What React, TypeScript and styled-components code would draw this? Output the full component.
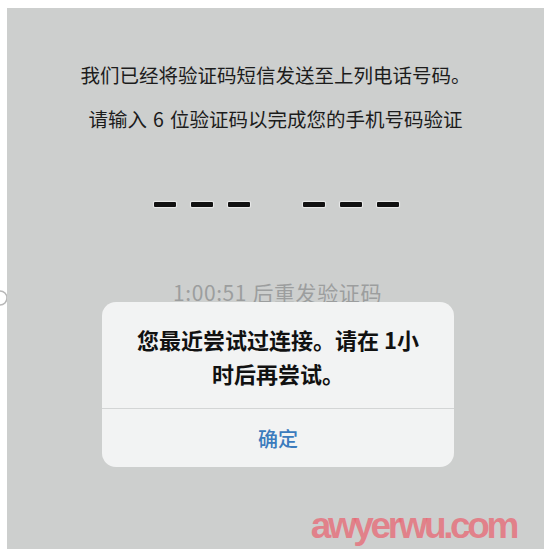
import styled, { createGlobalStyle } from 'styled-components';

const GlobalStyle = createGlobalStyle`
  html, body {
    margin: 0;
    padding: 0;
    background: #ffffff;
  }
  body {
    font-family: "Noto Sans CJK SC", "Noto Sans", sans-serif;
  }
`;

const Page = styled.div`
  position: relative;
  width: 550px;
  height: 557px;
  padding: 8px 0 0 7px;
  box-sizing: border-box;
`;

const Screen = styled.div`
  position: relative;
  width: 537px;
  height: 541px;
  background: #cdcfce;
  display: flex;
  flex-direction: column;
  align-items: center;
  padding-top: 54px;
  box-sizing: border-box;
  overflow: hidden;
`;

const Line = styled.p<{ $gap?: number }>`
  margin: ${(p) => p.$gap ?? 0}px 0 0;
  font-size: 19.5px;
  line-height: 26px;
  color: #1c1c1c;
  white-space: nowrap;
`;

const Digit = styled.span`
  margin: 0 6px;
`;

const CodeRow = styled.div`
  display: flex;
  gap: 53px;
  margin-top: 70px;
  margin-left: 2px;
`;

const CodeGroup = styled.div`
  display: flex;
  gap: 15px;
`;

const Dash = styled.span`
  width: 22px;
  height: 5px;
  background: #111;
  border-radius: 1px;
  box-shadow: 0 0 1px 1px rgba(255, 255, 255, 0.6);
`;

const Countdown = styled.p`
  margin: 71px 0 0 4px;
  font-size: 21px;
  line-height: 28px;
  letter-spacing: 0.6px;
  color: #9c9e9e;
  white-space: nowrap;
`;

const Alert = styled.div`
  position: absolute;
  left: 95px;
  top: 294px;
  width: 352px;
  height: 165px;
  background: #f2f3f3;
  border-radius: 14px;
  display: flex;
  flex-direction: column;
  overflow: hidden;
`;

const Message = styled.div`
  height: 107px;
  display: flex;
  align-items: center;
  justify-content: center;
  text-align: center;
  padding-top: 2px;
  box-sizing: border-box;
  border-bottom: 1px solid #d3d5d5;
  font-size: 22px;
  line-height: 34px;
  font-weight: 700;
  color: #111;
`;

const Action = styled.div`
  flex: 1;
  display: flex;
  align-items: center;
  justify-content: center;
  font-size: 20px;
  font-weight: 500;
  color: #3b7bbd;
`;

const Watermark = styled.div`
  position: absolute;
  right: 28px;
  bottom: 2px;
  font-family: "Liberation Sans", Arial, sans-serif;
  font-size: 37px;
  font-weight: 700;
  letter-spacing: -3.4px;
  color: rgba(232, 104, 116, 0.75);
`;

const EdgeMark = styled.svg`
  position: absolute;
  left: 0;
  top: 289px;
`;

export default function App() {
  return (
    <Page>
      <GlobalStyle />
      <EdgeMark width="12" height="18" viewBox="0 0 12 18">
        <path d="M0 2 A7 7 0 0 1 0 16" fill="none" stroke="#b8b8b8" strokeWidth="1.6" />
      </EdgeMark>
      <Screen>
        <Line>我们已经将验证码短信发送至上列电话号码。</Line>
        <Line $gap={18}>
          请输入<Digit>6</Digit>位验证码以完成您的手机号码验证
        </Line>
        <CodeRow>
          <CodeGroup>
            <Dash />
            <Dash />
            <Dash />
          </CodeGroup>
          <CodeGroup>
            <Dash />
            <Dash />
            <Dash />
          </CodeGroup>
        </CodeRow>
        <Countdown>1:00:51 后重发验证码</Countdown>
        <Alert>
          <Message>
            <span>
              您最近尝试过连接。请在 1小
              <br />
              时后再尝试。
            </span>
          </Message>
          <Action>确定</Action>
        </Alert>
        <Watermark>awyerwu.com</Watermark>
      </Screen>
    </Page>
  );
}
